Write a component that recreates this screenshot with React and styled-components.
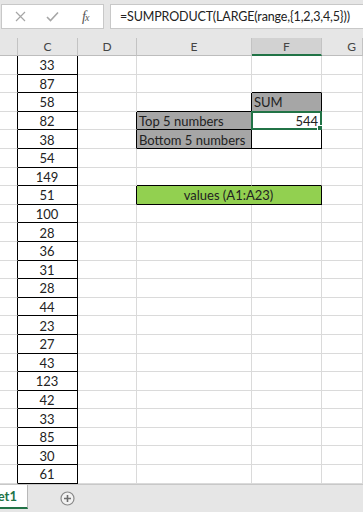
import React from "react";
import styled, { createGlobalStyle } from "styled-components";

const GlobalStyle = createGlobalStyle`
  html, body {
    margin: 0;
    padding: 0;
    background: #fff;
  }
  body {
    font-family: Lato, "Open Sans", sans-serif;
  }
`;

const COLS = "18px 60px 59px 115px 70px 1fr";
const GRID = "#dadada";
const GREEN = "#217346";

const Screen = styled.div`
  width: 363px;
  height: 512px;
  overflow: hidden;
  display: flex;
  flex-direction: column;
  background: #fff;
`;

const FormulaBar = styled.div`
  flex: none;
  height: 38px;
  box-sizing: border-box;
  padding: 4px 0 0 1px;
  background: #e6e6e6;
  display: flex;
  align-items: flex-start;
  gap: 6px;
`;

const ButtonsBox = styled.div`
  flex: none;
  width: 103px;
  height: 25px;
  box-sizing: border-box;
  background: #fff;
  border: 1px solid #c8c8c8;
  display: flex;
  align-items: center;
  padding-left: 10px;
  gap: 16px;
`;

const IconSlot = styled.span`
  width: ${(p) => p.$w}px;
  display: flex;
  justify-content: center;
  align-items: center;
  color: ${(p) => p.$color || "#a6a6a6"};
`;

const Fx = styled.span`
  font-family: "Liberation Serif", serif;
  font-style: italic;
  font-size: 14px;
  color: #555;
  letter-spacing: -1px;
  margin-left: 6px;
  small {
    font-size: 10px;
  }
`;

const FormulaInput = styled.div`
  flex: 1;
  min-width: 0;
  height: 25px;
  box-sizing: border-box;
  background: #fff;
  border: 1px solid #c8c8c8;
  border-right: none;
  display: flex;
  align-items: center;
  padding-left: 9px;
  font-size: 12.5px;
  letter-spacing: -0.15px;
  color: #222;
  white-space: nowrap;
  overflow: hidden;
`;

const HeaderRow = styled.div`
  flex: none;
  height: 18px;
  display: grid;
  grid-template-columns: ${COLS};
  background: #e6e6e6;
`;

const HeaderCell = styled.div`
  box-sizing: border-box;
  border-right: 1px solid #c3c3c3;
  border-bottom: ${(p) => (p.$selected ? `2px solid ${GREEN}` : "1px solid #bdbdbd")};
  background: ${(p) => (p.$selected ? "#d2d2d2" : "#e6e6e6")};
  display: flex;
  align-items: center;
  justify-content: ${(p) => (p.$left ? "flex-end" : "center")};
  padding-right: ${(p) => (p.$left ? "6px" : "0")};
  font-size: 12px;
  color: #444;
`;

const Sheet = styled.div`
  flex: none;
  display: grid;
  grid-template-rows: repeat(23, 18.6px);
`;

const Row = styled.div`
  display: grid;
  grid-template-columns: ${COLS};
`;

const Cell = styled.div`
  position: relative;
  box-sizing: border-box;
  grid-column: span ${(p) => p.$span || 1};
  border-right: 1px solid ${(p) => (p.$r ? "#000" : GRID)};
  border-bottom: 1px solid ${(p) => (p.$b ? "#000" : GRID)};
  background: ${(p) => p.$bg || "#fff"};
  display: flex;
  align-items: center;
  justify-content: ${(p) =>
    p.$align === "right" ? "flex-end" : p.$align === "center" ? "center" : "flex-start"};
  padding: 1px 3px 0 2px;
  font-size: 13px;
  color: #222;
  white-space: nowrap;
`;

const ActiveFrame = styled.div`
  position: absolute;
  left: -1px;
  top: -1px;
  right: -1px;
  bottom: -1px;
  border: 2px solid ${GREEN};
  pointer-events: none;
`;

const FillHandle = styled.div`
  position: absolute;
  right: -4px;
  bottom: -4px;
  width: 5px;
  height: 5px;
  background: ${GREEN};
  border: 1px solid #fff;
`;

const TabBar = styled.div`
  flex: 1;
  background: #e6e6e6;
  border-top: 1px solid #c8c8c8;
  display: flex;
  align-items: flex-start;
`;

const Tab = styled.div`
  width: 28px;
  height: 24px;
  box-sizing: border-box;
  background: #fff;
  border-right: 1px solid #b8b8b8;
  border-bottom: 2px solid ${GREEN};
  color: ${GREEN};
  font-weight: 700;
  font-size: 13px;
  display: flex;
  align-items: center;
  justify-content: flex-end;
  overflow: hidden;
  padding-right: 10px;
`;

const AddSheet = styled.div`
  margin: 6px 0 0 32px;
  display: flex;
`;

const values = [33, 87, 58, 82, 38, 54, 149, 51, 100, 28, 36, 31, 28, 44, 23, 27, 43, 123, 42, 33, 85, 30, 61];

const buildRow = (r) => {
  const n = r + 1;
  const cells = [];
  cells.push({ key: "B", r: true });
  cells.push({ key: "C", r: true, b: true, text: values[r], align: "center" });
  cells.push({ key: "D", r: n === 4 || n === 5 || n === 8 });

  if (n === 8) {
    cells.push({ key: "EF", span: 2, r: true, b: true, bg: "#92d050", text: "values (A1:A23)", align: "center" });
  } else {
    const e = { key: "E" };
    const f = { key: "F" };
    if (n === 2) f.b = true;
    if (n === 3) {
      Object.assign(e, { r: true, b: true });
      Object.assign(f, { r: true, b: true, bg: "#a6a6a6", text: "SUM" });
    }
    if (n === 4) {
      Object.assign(e, { r: true, b: true, bg: "#a6a6a6", text: "Top 5 numbers" });
      Object.assign(f, { r: true, b: true, text: "544", align: "right", active: true });
    }
    if (n === 5) {
      Object.assign(e, { r: true, b: true, bg: "#a6a6a6", text: "Bottom 5 numbers" });
      Object.assign(f, { r: true, b: true });
    }
    if (n === 7) {
      e.b = true;
      f.b = true;
    }
    cells.push(e, f);
  }
  cells.push({ key: "G" });
  return cells;
};

const CrossIcon = () => (
  <svg width="11" height="11" viewBox="0 0 11 11">
    <path d="M1 1 L10 10 M10 1 L1 10" stroke="currentColor" strokeWidth="1.2" fill="none" />
  </svg>
);

const CheckIcon = () => (
  <svg width="13" height="11" viewBox="0 0 13 11">
    <path d="M1 6 L4.5 9.5 L12 1.5" stroke="currentColor" strokeWidth="1.6" fill="none" />
  </svg>
);

const PlusCircle = () => (
  <svg width="15" height="15" viewBox="0 0 15 15">
    <circle cx="7.5" cy="7.5" r="6.5" stroke="#8a8a8a" strokeWidth="1.2" fill="#f2f2f2" />
    <path d="M7.5 4 V11 M4 7.5 H11" stroke="#6e6e6e" strokeWidth="1.6" />
  </svg>
);

export default function App() {
  return (
    <Screen>
      <GlobalStyle />
      <FormulaBar>
        <ButtonsBox>
          <IconSlot $w={16}>
            <CrossIcon />
          </IconSlot>
          <IconSlot $w={16}>
            <CheckIcon />
          </IconSlot>
          <Fx>
            f<small>x</small>
          </Fx>
        </ButtonsBox>
        <FormulaInput>=SUMPRODUCT(LARGE(range,{"{"}1,2,3,4,5{"}"}))</FormulaInput>
      </FormulaBar>

      <HeaderRow>
        <HeaderCell />
        <HeaderCell>C</HeaderCell>
        <HeaderCell>D</HeaderCell>
        <HeaderCell>E</HeaderCell>
        <HeaderCell $selected>F</HeaderCell>
        <HeaderCell $left>G</HeaderCell>
      </HeaderRow>

      <Sheet>
        {values.map((_, r) => (
          <Row key={r}>
            {buildRow(r).map((c) => (
              <Cell key={c.key} $r={c.r} $b={c.b} $bg={c.bg} $span={c.span} $align={c.align}>
                {c.text}
                {c.active && (
                  <ActiveFrame>
                    <FillHandle />
                  </ActiveFrame>
                )}
              </Cell>
            ))}
          </Row>
        ))}
      </Sheet>

      <TabBar>
        <Tab>Sheet1</Tab>
        <AddSheet>
          <PlusCircle />
        </AddSheet>
      </TabBar>
    </Screen>
  );
}
